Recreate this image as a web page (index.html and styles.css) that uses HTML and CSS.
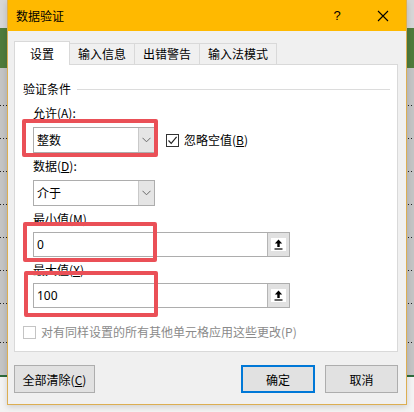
FILE: index.html
```html
<!DOCTYPE html>
<html lang="zh-CN">
<head>
<meta charset="utf-8">
<title>数据验证</title>
<link rel="stylesheet" href="styles.css">
</head>
<body>
<div class="dialog">
  <div class="titlebar">
    <span class="title">数据验证</span>
    <span class="help">?</span>
    <span class="close"><svg width="12" height="12" viewBox="0 0 12 12"><path d="M1 1L11 11M11 1L1 11" stroke="#000" stroke-width="1.1" fill="none"/></svg></span>
  </div>
  <div class="content">
    <div class="tabs">
      <div class="tab active">设置</div>
      <div class="tab">输入信息</div>
      <div class="tab">出错警告</div>
      <div class="tab">输入法模式</div>
    </div>
    <div class="panel">
      <div class="group-title"><span>验证条件</span><span class="rule"></span></div>
      <div class="label first">允许(<u>A</u>):</div>
      <div class="row">
        <div class="select">
          <span class="value">整数</span>
          <span class="drop"><svg width="9" height="6" viewBox="0 0 9 6"><path d="M0.5 0.8L4.5 4.8L8.5 0.8" stroke="#6a6a6a" stroke-width="1" fill="none"/></svg></span>
          <span class="highlight h1"></span>
        </div>
        <label class="check">
          <span class="box"><svg width="11" height="11" viewBox="0 0 11 11"><path d="M1.5 5.5L4.2 8.3L9.6 1.8" stroke="#222" stroke-width="1.2" fill="none"/></svg></span>
          <span>忽略空值(<u>B</u>)</span>
        </label>
      </div>
      <div class="label">数据(<u>D</u>):</div>
      <div class="row">
        <div class="select">
          <span class="value">介于</span>
          <span class="drop"><svg width="9" height="6" viewBox="0 0 9 6"><path d="M0.5 0.8L4.5 4.8L8.5 0.8" stroke="#6a6a6a" stroke-width="1" fill="none"/></svg></span>
        </div>
      </div>
      <div class="label">最小值(<u>M</u>)</div>
      <div class="input">
        <span class="value">0</span>
        <span class="ref"><span class="refbox"><svg width="11" height="11" viewBox="0 0 11 11"><path d="M5.5 0.5L1.8 4.6H4.3V8H6.7V4.6H9.2Z" fill="#000"/><path d="M1.5 10H9.5" stroke="#000" stroke-width="1.2"/></svg></span></span>
        <span class="highlight h2"></span>
      </div>
      <div class="label">最大值(<u>X</u>)</div>
      <div class="input">
        <span class="value">100</span>
        <span class="ref"><span class="refbox"><svg width="11" height="11" viewBox="0 0 11 11"><path d="M5.5 0.5L1.8 4.6H4.3V8H6.7V4.6H9.2Z" fill="#000"/><path d="M1.5 10H9.5" stroke="#000" stroke-width="1.2"/></svg></span></span>
        <span class="highlight h3"></span>
      </div>
      <label class="check disabled">
        <span class="box"></span>
        <span>对有同样设置的所有其他单元格应用这些更改(P)</span>
      </label>
    </div>
    <div class="buttons">
      <button class="btn clear">全部清除(<u>C</u>)</button>
      <div class="right">
        <button class="btn ok">确定</button>
        <button class="btn cancel">取消</button>
      </div>
    </div>
  </div>
</div>
</body>
</html>
```
FILE: styles.css
```css
html, body {
  margin: 0;
  padding: 0;
}
body {
  width: 414px;
  height: 412px;
  overflow: hidden;
  font-family: "Noto Sans CJK SC", "Noto Sans", sans-serif;
  font-size: 12px;
  color: #000;
  background-image:
    linear-gradient(to right, #222 1px, transparent 1px),
    linear-gradient(to right, #222 1px, transparent 1px),
    linear-gradient(to right, #222 1px, transparent 1px),
    linear-gradient(to right, #222 1px, transparent 1px),
    linear-gradient(to right, #222 1px, transparent 1px),
    linear-gradient(to right, #222 1px, transparent 1px),
    linear-gradient(to right, #222 1px, transparent 1px),
    linear-gradient(to right, #222 1px, transparent 1px),
    linear-gradient(to bottom,
      #d6d6d6 0, #d6d6d6 28px,
      #4f7b3b 28px, #4f7b3b 68px,
      #c4c4c4 68px, #c4c4c4 375px,
      #2f6a3c 375px, #2f6a3c 377px,
      #f3f3f3 377px);
  background-size: 3px 1px, 3px 1px, 3px 1px, 3px 1px, 3px 1px, 3px 1px, 3px 1px, 3px 1px, 100% 100%;
  background-repeat: repeat-x, repeat-x, repeat-x, repeat-x, repeat-x, repeat-x, repeat-x, repeat-x, no-repeat;
  background-position: 0 105px, 0 138px, 0 171px, 0 204px, 0 237px, 0 270px, 0 303px, 0 342px, 0 0;
}
.dialog {
  width: 398px;
  margin-left: 7px;
  background: #f0f0f0;
  border: 1px solid #dcae52;
  border-top: none;
  box-shadow: 0 2px 6px rgba(0,0,0,0.15);
}
.titlebar {
  height: 31px;
  background: #ffb900;
  display: flex;
  align-items: center;
  padding-left: 8px;
}
.title {
  flex: 1;
  line-height: 16px;
}
.help {
  width: 20px;
  text-align: center;
  font-family: "Liberation Sans", sans-serif;
  font-size: 13px;
  margin-right: 13px;
}
.close {
  width: 46px;
  display: flex;
  justify-content: center;
  align-items: center;
}
.content {
  padding: 10px 8px 11px 6px;
}
.tabs {
  display: flex;
  align-items: flex-end;
  height: 23px;
  position: relative;
  z-index: 1;
}
.tab {
  height: 21px;
  line-height: 20px;
  padding: 0 8px;
  border: 1px solid #d9d9d9;
  border-bottom: none;
  border-left: none;
  background: #f0f0f0;
  box-sizing: border-box;
}
.tab.active {
  height: 24px;
  line-height: 23px;
  padding: 0 15px;
  background: #fff;
  border-left: 1px solid #d9d9d9;
  margin-bottom: -1px;
}
.panel {
  background: #fff;
  border: 1px solid #d9d9d9;
  padding-top: 16px;
  height: 270px;
}
.group-title {
  display: flex;
  align-items: center;
  height: 16px;
  line-height: 16px;
  padding-left: 8px;
  padding-right: 7px;
}
.rule {
  flex: 1;
  height: 1px;
  background: #dcdcdc;
  margin-left: 6px;
}
.label {
  height: 16px;
  line-height: 16px;
  padding-left: 18px;
  margin-top: 5px;
}
.label.first {
  margin-top: 8px;
}
.row {
  display: flex;
  align-items: center;
  padding-left: 18px;
  margin-top: 6px;
}
.select {
  position: relative;
  width: 122px;
  height: 26px;
  box-sizing: border-box;
  border: 1px solid #adadad;
  background: #fff;
  display: flex;
  align-items: center;
}
.select .value {
  flex: 1;
  padding-left: 3px;
  line-height: 16px;
}
.drop {
  width: 15px;
  height: 24px;
  background: #e5e5e5;
  border-left: 1px solid #c9c9c9;
  display: flex;
  align-items: center;
  justify-content: center;
}
.check {
  display: flex;
  align-items: center;
  margin-left: 11px;
  line-height: 16px;
}
.check .box {
  width: 13px;
  height: 13px;
  box-sizing: border-box;
  border: 1px solid #333;
  background: #fff;
  margin-right: 5px;
  display: flex;
  align-items: center;
  justify-content: center;
}
.input {
  position: relative;
  margin-left: 18px;
  margin-top: 5px;
  width: 257px;
  height: 25px;
  box-sizing: border-box;
  border: 1px solid #adadad;
  background: #fff;
  display: flex;
  align-items: center;
}
.input .value {
  flex: 1;
  padding-left: 3px;
  line-height: 16px;
  font-family: "Noto Sans", sans-serif;
}
.ref {
  width: 21px;
  height: 23px;
  background: #e1e1e1;
  border-left: 1px solid #b5b5b5;
  display: flex;
  align-items: center;
  justify-content: center;
}
.refbox {
  width: 15px;
  height: 13px;
  background: #fff;
  display: flex;
  align-items: center;
  justify-content: center;
}
.highlight {
  position: absolute;
  box-sizing: border-box;
  border: 4px solid #ea5057;
  border-radius: 2px;
  pointer-events: none;
}
.h1 {
  left: -12px;
  top: -9px;
  width: 136px;
  height: 38px;
}
.h2 {
  left: -11px;
  top: -11px;
  width: 134px;
  height: 40px;
}
.h3 {
  left: -10px;
  top: -13px;
  width: 134px;
  height: 46px;
}
.check.disabled {
  margin-left: 8px;
  margin-top: 16px;
  color: #8a8a8a;
}
.check.disabled .box {
  border-color: #c4c4c4;
}
.buttons {
  display: flex;
  justify-content: space-between;
  margin-top: 13px;
}
.right {
  display: flex;
  gap: 10px;
}
.btn {
  font-family: "Noto Sans CJK SC", "Noto Sans", sans-serif;
  font-size: 12px;
  color: #000;
  height: 28px;
  background: #e1e1e1;
  border: 1px solid #adadad;
  padding: 0;
  margin: 0;
  box-sizing: border-box;
}
.clear {
  width: 81px;
}
.ok {
  width: 74px;
  border: 2px solid #0078d7;
}
.cancel {
  width: 73px;
}
```
